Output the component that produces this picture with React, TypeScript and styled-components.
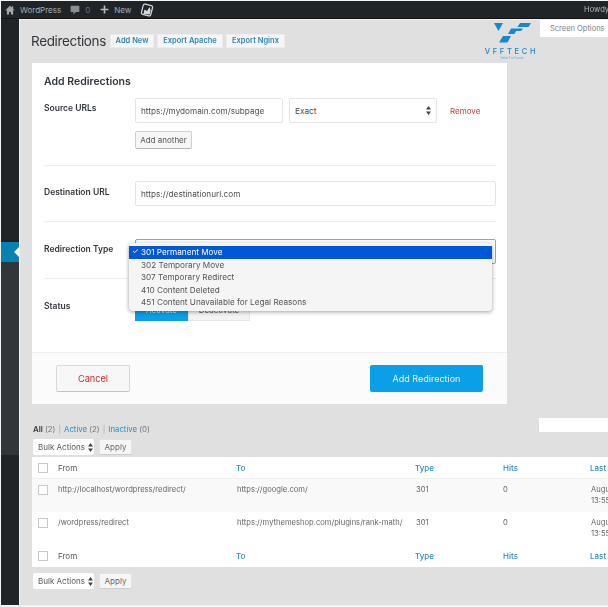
import React, { FunctionComponent } from "react";
import styled, { createGlobalStyle } from "styled-components";

const GlobalStyle = createGlobalStyle`
    html, body {
        margin: 0;
        padding: 0;
        height: 607px;
        overflow: hidden;
        background: #f4f4f4;
    }
    * {
        box-sizing: border-box;
    }
    body, input {
        font-family: Inter, "Noto Sans", "Liberation Sans", sans-serif;
    }
`;

const Shell = styled.div`
    display: flex;
    flex-direction: column;
    width: 608px;
    height: 607px;
    padding: 1px 0 2px 1px;
    background: #f4f4f4;
    filter: blur(0.35px);
`;

// Admin bar
const AdminBar = styled.div`
    display: flex;
    align-items: center;
    flex: 0 0 18px;
    height: 18px;
    padding-left: 4px;
    background: #1f2429;
    color: #a9adb1;
    font-size: 8px;
    border-bottom: 1px solid #111;
`;
const BarItem = styled.div<{ $gap?: number; $after?: number }>`
    display: flex;
    align-items: center;
    gap: ${(p) => p.$gap ?? 5}px;
    margin-right: ${(p) => p.$after ?? 10}px;
`;
const CommentCount = styled.span`
    color: #6f7479;
`;
const Howdy = styled.div`
    margin-left: auto;
    width: 24px;
    font-size: 7.6px;
    white-space: nowrap;
    color: #b4b7ba;
`;

// Left menu
const Body = styled.div`
    display: flex;
    flex: 1;
    min-height: 0;
`;
const SideMenu = styled.div`
    display: flex;
    flex-direction: column;
    flex: 0 0 18px;
    background: #1f2429;
`;
const MenuTop = styled.div`
    height: 223px;
`;
const MenuActive = styled.div`
    position: relative;
    height: 20px;
    background: #0482b4;
    &::after {
        content: "";
        position: absolute;
        right: 0;
        top: 5px;
        border: 5px solid transparent;
        border-right-color: #f1f1f1;
        border-left-width: 0;
    }
`;
const MenuSub = styled.div`
    height: 193px;
    background: #31363b;
`;

// Page
const Content = styled.div`
    position: relative;
    flex: 1;
    min-width: 0;
    overflow: hidden;
    background: #e0e0e0;
    border-left: 1px solid #f2f2f2;
    border-top: 1px solid #f2f2f2;
    padding: 13px 0 0 12px;
`;
const Wrap = styled.div`
    width: 608px;
`;
const TitleRow = styled.div`
    display: flex;
    align-items: center;
    height: 15px;
    margin-bottom: 15px;
`;
const Title = styled.h1`
    width: 79px;
    margin: 0 0 0 -1px;
    font-size: 13.5px;
    font-weight: 400;
    letter-spacing: -0.35px;
    color: #33373b;
    white-space: nowrap;
`;
const TitleAction = styled.div<{ $width: number }>`
    display: flex;
    align-items: center;
    justify-content: center;
    width: ${(p) => p.$width}px;
    height: 14px;
    margin-right: 3px;
    background: #f6f6f6;
    border: 1px solid #ececec;
    font-size: 7.5px;
    font-weight: 600;
    color: #2b86b8;
    white-space: nowrap;
`;
const ScreenOptions = styled.div`
    position: absolute;
    top: 0;
    right: 0;
    width: 68px;
    height: 17px;
    padding: 3px 0 0 10px;
    background: #fff;
    font-size: 7.5px;
    line-height: 11px;
    color: #7c8084;
    white-space: nowrap;
`;
const LogoBox = styled.div`
    position: absolute;
    top: 3px;
    left: 465px;
    width: 54px;
    color: #1887cf;
    text-align: center;
`;
const LogoName = styled.div`
    margin: 1px -1px 0 -2px;
    font-size: 7.5px;
    line-height: 8px;
    font-weight: 500;
    letter-spacing: 2.7px;
    white-space: nowrap;
`;
const LogoTag = styled.div`
    margin-top: 1px;
    font-size: 3px;
    line-height: 3px;
    color: #6aa9d8;
`;

// Add form card
const Card = styled.div`
    width: 475px;
    background: #fff;
`;
const CardBody = styled.div`
    padding: 12px 11px 0 12px;
`;
const CardTitle = styled.h2`
    margin: 0 0 9px;
    font-size: 10.5px;
    line-height: 14px;
    font-weight: 600;
    color: #32373c;
`;
const FormRow = styled.div<{ $top: number; $bottom: number; $last?: boolean }>`
    display: grid;
    grid-template-columns: 91px 1fr;
    padding: ${(p) => p.$top}px 0 ${(p) => p.$bottom}px;
    border-bottom: ${(p) => (p.$last ? "none" : "1px solid #efefef")};
`;
const FieldLabel = styled.div<{ $top: number }>`
    padding-top: ${(p) => p.$top}px;
    font-size: 8.5px;
    line-height: 12px;
    font-weight: 600;
    color: #32373c;
    white-space: nowrap;
`;
const FieldLine = styled.div`
    display: flex;
    align-items: center;
`;
const TextField = styled.input<{ $width?: number }>`
    display: block;
    width: ${(p) => (p.$width ? `${p.$width}px` : "100%")};
    height: 25px;
    padding: 0 5px;
    border: 1px solid #e6e6e6;
    border-radius: 2px;
    background: #fff;
    outline: none;
    font-size: 8.2px;
    color: #4a4e52;
`;
const SelectBox = styled.div<{ $focus?: boolean }>`
    position: relative;
    display: flex;
    align-items: center;
    justify-content: space-between;
    height: 25px;
    padding: 0 5px;
    border: 1px solid ${(p) => (p.$focus ? "#5cb6ea" : "#e6e6e6")};
    border-radius: 2px;
    background: #fff;
    font-size: 8.2px;
    color: #4a4e52;
`;
const ExactSelect = styled(SelectBox)`
    width: 148px;
    margin-left: 6px;
`;
const RemoveLink = styled.span`
    margin: 0 0 0 13px;
    font-size: 8px;
    color: #c9383c;
`;
const SmallButton = styled.div`
    display: flex;
    align-items: center;
    justify-content: center;
    width: 57px;
    height: 18px;
    margin-top: 8px;
    background: #f6f6f6;
    border: 1px solid #cfcfcf;
    border-bottom-color: #b5b5b5;
    border-radius: 2px;
    font-size: 8px;
    color: #555;
    white-space: nowrap;
`;
const Dropdown = styled.div`
    position: absolute;
    left: -7px;
    top: 3px;
    width: 363px;
    padding: 3px 0 2px;
    background: #f5f5f5;
    border-radius: 4px;
    box-shadow: 0 1px 4px rgba(0, 0, 0, 0.38);
    z-index: 2;
`;
const DropdownItem = styled.div<{ $selected?: boolean }>`
    position: relative;
    height: 12.5px;
    padding-left: 12px;
    font-size: 8.2px;
    line-height: 12.5px;
    color: ${(p) => (p.$selected ? "#fff" : "#555")};
    background: ${(p) => (p.$selected ? "#0058d9" : "transparent")};
    white-space: nowrap;
`;
const CheckMark = styled.span`
    position: absolute;
    left: 3px;
    top: 0;
    font-size: 7.5px;
`;
const Toggle = styled.div`
    display: flex;
    height: 22px;
`;
const ToggleOption = styled.div<{ $on?: boolean }>`
    display: flex;
    align-items: center;
    justify-content: center;
    width: ${(p) => (p.$on ? 53 : 62)}px;
    background: ${(p) => (p.$on ? "#0a9fe6" : "#f4f4f4")};
    border: 1px solid ${(p) => (p.$on ? "#0a9fe6" : "#e6e6e6")};
    font-size: 8px;
    color: ${(p) => (p.$on ? "#cfeaf9" : "#555")};
`;
const CardFooter = styled.div`
    display: flex;
    justify-content: space-between;
    padding: 12px 24px 12px;
    background: #fbfbfb;
    border-top: 1px solid #efefef;
`;
const CancelButton = styled.div`
    display: flex;
    align-items: center;
    justify-content: center;
    width: 74px;
    height: 27px;
    background: #f7f7f7;
    border: 1px solid #d8d8d8;
    border-bottom-color: #c2c2c2;
    border-radius: 2px;
    font-size: 9.2px;
    color: #c9282d;
`;
const SubmitButton = styled.div`
    display: flex;
    align-items: center;
    justify-content: center;
    width: 113px;
    height: 27px;
    background: #0a9fe6;
    border-radius: 2px;
    font-size: 9px;
    color: #e8f6fd;
`;

// Redirections list
const ListHead = styled.div`
    display: flex;
    align-items: center;
    justify-content: space-between;
    height: 14px;
    margin-top: 14px;
    padding-left: 1px;
    font-size: 7.8px;
    color: #777;
`;
const Filters = styled.div`
    margin-top: 8px;
    white-space: nowrap;
`;
const FilterCurrent = styled.b`
    font-weight: 600;
    color: #32373c;
`;
const FilterLink = styled.span`
    color: #2b8cc4;
`;
const Pipe = styled.span`
    margin: 0 3px;
    color: #aaa;
`;
const SearchBox = styled.div`
    width: 101px;
    height: 14px;
    background: #fff;
`;
const Bulk = styled.div<{ $top: number }>`
    display: flex;
    align-items: center;
    gap: 5px;
    height: 16px;
    margin: ${(p) => p.$top}px 0 0 1px;
`;
const BulkSelect = styled.div`
    display: flex;
    align-items: center;
    justify-content: space-between;
    width: 61px;
    height: 16px;
    padding: 0 1px 0 5px;
    background: #fff;
    border-radius: 2px;
    font-size: 8px;
    color: #555;
    white-space: nowrap;
`;
const ApplyButton = styled.div`
    display: flex;
    align-items: center;
    justify-content: center;
    width: 33px;
    height: 16px;
    background: #f6f6f6;
    border: 1px solid #e2e2e2;
    border-bottom-color: #cecece;
    font-size: 8px;
    color: #666;
`;
const Table = styled.div`
    margin-top: 2px;
    background: #fff;
`;
const TableRow = styled.div<{ $height: number; $tint?: boolean; $line?: boolean }>`
    display: grid;
    grid-template-columns: 26px 178px 179px 88px 87px 50px;
    height: ${(p) => p.$height}px;
    background: ${(p) => (p.$tint ? "#f9f9f9" : "#fff")};
    border-bottom: ${(p) => (p.$line ? "1px solid #efefef" : "none")};
`;
const HeadCell = styled.div<{ $sortable?: boolean }>`
    display: flex;
    align-items: center;
    font-size: 8px;
    font-weight: ${(p) => (p.$sortable ? 500 : 400)};
    color: ${(p) => (p.$sortable ? "#2b8cc4" : "#555")};
    white-space: nowrap;
`;
const BodyCell = styled.div<{ $nudge?: number }>`
    padding: 5px 0 0 ${(p) => p.$nudge ?? 0}px;
    font-size: 7.6px;
    line-height: 11px;
    color: #666;
    white-space: nowrap;
`;
const CheckCell = styled.div<{ $center?: boolean }>`
    display: flex;
    align-items: ${(p) => (p.$center ? "center" : "flex-start")};
    padding: ${(p) => (p.$center ? 0 : 6)}px 0 0 6px;
`;
const CheckBox = styled.div`
    width: 10px;
    height: 10px;
    background: #fff;
    border: 1px solid #c9c9c9;
`;

const HomeIcon = () => (
    <svg width="10" height="10" viewBox="0 0 16 16" fill="#a3a7ab">
        <path d="M8 1 0.5 8.5H3V15h3.5v-4h3v4H13V8.5h2.5L13 6V2h-2v2z" />
    </svg>
);

const CommentIcon = () => (
    <svg width="10" height="10" viewBox="0 0 16 16" fill="#8b8f93">
        <path d="M2 1h12a1 1 0 0 1 1 1v8a1 1 0 0 1-1 1H9.5L5.5 15v-4H2a1 1 0 0 1-1-1V2a1 1 0 0 1 1-1z" />
    </svg>
);

const PlusIcon = () => (
    <svg width="9" height="9" viewBox="0 0 16 16" stroke="#b4b7ba" strokeWidth="3">
        <path d="M8 1v14M1 8h14" />
    </svg>
);

const RankIcon = () => (
    <svg width="14" height="14" viewBox="0 0 16 16">
        <rect x="2.5" y="2" width="11" height="12" rx="2" fill="none" stroke="#d4d6d8" strokeWidth="1.4" transform="rotate(14 8 8)" />
        <path d="M4 12.5 5 7.5 8 9l3-4.5 1.2 4-1 4.6z" fill="#d4d6d8" />
    </svg>
);

const Arrows: FunctionComponent<{ color?: string }> = ({ color = "#444" }) => (
    <svg width="5" height="9" viewBox="0 0 5 9" fill={color}>
        <path d="M2.5 0 5 3.5H0zM2.5 9 0 5.5h5z" />
    </svg>
);

const VffMark = () => (
    <svg width="38" height="20" viewBox="0 0 38 20" fill="#1887cf">
        <path d="M1 0h9L5.5 8z" />
        <path d="M27 0h11l-2.500 4H24.500z" />
        <path d="M18 5.500h12l-2 2.500h-5l-1.500 3H15z" />
        <path d="M10 13h8l-3.500 6.500H6z" />
    </svg>
);

const BulkActions: FunctionComponent<{ top: number }> = ({ top }) => (
    <Bulk $top={top}>
        <BulkSelect>
            Bulk Actions
            <Arrows />
        </BulkSelect>
        <ApplyButton>Apply</ApplyButton>
    </Bulk>
);

const options = [
    "301 Permanent Move",
    "302 Temporary Move",
    "307 Temporary Redirect",
    "410 Content Deleted",
    "451 Content Unavailable for Legal Reasons",
];

const redirects = [
    { from: "http://localhost/wordpress/redirect/", to: "https://google.com/", tint: true },
    { from: "/wordpress/redirect", to: "https://mythemeshop.com/plugins/rank-math/", tint: false },
];

const ColumnTitles = () => (
    <>
        <CheckCell $center>
            <CheckBox />
        </CheckCell>
        <HeadCell>From</HeadCell>
        <HeadCell $sortable>To</HeadCell>
        <HeadCell $sortable>Type</HeadCell>
        <HeadCell $sortable>Hits</HeadCell>
        <HeadCell $sortable>Last</HeadCell>
    </>
);

export default function App() {
    return (
        <>
            <GlobalStyle />
            <Shell>
                <AdminBar>
                    <BarItem $after={9}>
                        <HomeIcon />
                        WordPress
                    </BarItem>
                    <BarItem $after={10}>
                        <CommentIcon />
                        <CommentCount>0</CommentCount>
                    </BarItem>
                    <BarItem $after={9}>
                        <PlusIcon />
                        New
                    </BarItem>
                    <RankIcon />
                    <Howdy>Howdy</Howdy>
                </AdminBar>
                <Body>
                    <SideMenu>
                        <MenuTop />
                        <MenuActive />
                        <MenuSub />
                    </SideMenu>
                    <Content>
                        <ScreenOptions>Screen Options</ScreenOptions>
                        <LogoBox>
                            <VffMark />
                            <LogoName>VFFTECH</LogoName>
                            <LogoTag>Value For Future</LogoTag>
                        </LogoBox>
                        <Wrap>
                            <TitleRow>
                                <Title>Redirections</Title>
                                <TitleAction $width={44}>Add New</TitleAction>
                                <TitleAction $width={66}>Export Apache</TitleAction>
                                <TitleAction $width={59}>Export Nginx</TitleAction>
                            </TitleRow>
                            <Card>
                                <CardBody>
                                    <CardTitle>Add Redirections</CardTitle>
                                    <FormRow $top={0} $bottom={16}>
                                        <FieldLabel $top={4}>Source URLs</FieldLabel>
                                        <div>
                                            <FieldLine>
                                                <TextField $width={148} defaultValue="https://mydomain.com/subpage" />
                                                <ExactSelect>
                                                    Exact
                                                    <Arrows />
                                                </ExactSelect>
                                                <RemoveLink>Remove</RemoveLink>
                                            </FieldLine>
                                            <SmallButton>Add another</SmallButton>
                                        </div>
                                    </FormRow>
                                    <FormRow $top={15} $bottom={15}>
                                        <FieldLabel $top={5}>Destination URL</FieldLabel>
                                        <TextField defaultValue="https://destinationurl.com" />
                                    </FormRow>
                                    <FormRow $top={17} $bottom={14}>
                                        <FieldLabel $top={4}>Redirection Type</FieldLabel>
                                        <SelectBox $focus>
                                            <span />
                                            <Arrows />
                                            <Dropdown>
                                                {options.map((option, index) => (
                                                    <DropdownItem key={option} $selected={index === 0}>
                                                        {index === 0 && <CheckMark>✓</CheckMark>}
                                                        {option}
                                                    </DropdownItem>
                                                ))}
                                            </Dropdown>
                                        </SelectBox>
                                    </FormRow>
                                    <FormRow $top={20} $bottom={31} $last>
                                        <FieldLabel $top={1}>Status</FieldLabel>
                                        <Toggle>
                                            <ToggleOption $on>Activate</ToggleOption>
                                            <ToggleOption>Deactivate</ToggleOption>
                                        </Toggle>
                                    </FormRow>
                                </CardBody>
                                <CardFooter>
                                    <CancelButton>Cancel</CancelButton>
                                    <SubmitButton>Add Redirection</SubmitButton>
                                </CardFooter>
                            </Card>
                            <ListHead>
                                <Filters>
                                    <FilterCurrent>All</FilterCurrent> (2)
                                    <Pipe>|</Pipe>
                                    <FilterLink>Active</FilterLink> (2)
                                    <Pipe>|</Pipe>
                                    <FilterLink>Inactive</FilterLink> (0)
                                </Filters>
                                <SearchBox />
                            </ListHead>
                            <BulkActions top={7} />
                            <Table>
                                <TableRow $height={22} $line>
                                    <ColumnTitles />
                                </TableRow>
                                {redirects.map((item) => (
                                    <TableRow key={item.from} $height={33} $tint={item.tint}>
                                        <CheckCell>
                                            <CheckBox />
                                        </CheckCell>
                                        <BodyCell>{item.from}</BodyCell>
                                        <BodyCell $nudge={1}>{item.to}</BodyCell>
                                        <BodyCell $nudge={1}>301</BodyCell>
                                        <BodyCell>0</BodyCell>
                                        <BodyCell $nudge={1}>
                                            August 7, 2018
                                            <br />
                                            13:55:10
                                        </BodyCell>
                                    </TableRow>
                                ))}
                                <TableRow $height={22}>
                                    <ColumnTitles />
                                </TableRow>
                            </Table>
                            <BulkActions top={6} />
                        </Wrap>
                    </Content>
                </Body>
            </Shell>
        </>
    );
}
